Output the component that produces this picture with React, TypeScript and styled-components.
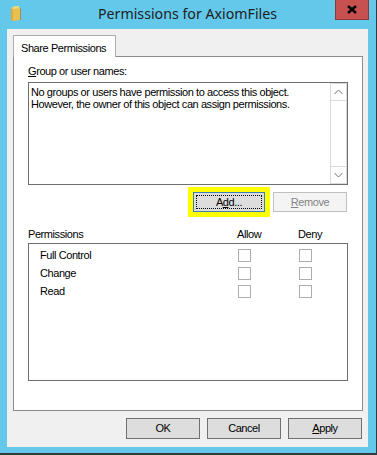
import React from "react";
import styled, { createGlobalStyle } from "styled-components";

const GlobalStyle = createGlobalStyle`
  html, body {
    margin: 0;
    padding: 0;
    background: #63c8ea;
  }
  body {
    font-family: "Liberation Sans", Arial, sans-serif;
    font-size: 11px;
    letter-spacing: -0.42px;
    color: #000;
  }
`;

const Frame = styled.div`
  width: 377px;
  height: 455px;
  box-sizing: border-box;
  background: #63c8ea;
  border-right: 1px solid #2f3b40;
  border-bottom: 2px solid #2f3b40;
  padding: 0 8px 6px 7px;
  display: flex;
  flex-direction: column;
`;

const TitleBar = styled.div`
  height: 29px;
  display: grid;
  grid-template-columns: 1fr auto 1fr;
  align-items: start;
`;

const AppIcon = styled.svg`
  margin: 5px 0 0 3px;
`;

const Title = styled.div`
  font-family: "Noto Sans", "Open Sans", sans-serif;
  font-size: 14.2px;
  letter-spacing: 0;
  color: #1e2224;
  line-height: 20px;
  padding-top: 4px;
  white-space: nowrap;
`;

const CloseButton = styled.div`
  justify-self: end;
  width: 32px;
  height: 19px;
  margin-right: -1px;
  background: #c75050;
  border: 1px solid #8a3a3a;
  border-top: none;
  display: flex;
  align-items: center;
  justify-content: center;
`;

const Client = styled.div`
  height: 418px;
  box-sizing: border-box;
  background: #f0f0f0;
  padding: 6px 5px 0 6px;
  display: flex;
  flex-direction: column;
`;

const TabStrip = styled.div`
  display: flex;
  height: 21px;
`;

const Tab = styled.div`
  position: relative;
  z-index: 1;
  width: 103px;
  height: 22px;
  background: #fff;
  border: 1px solid #adadad;
  border-bottom: none;
  padding: 6px 0 0 7px;
  box-sizing: border-box;
  line-height: 13px;
  white-space: nowrap;
`;

const Panel = styled.div`
  width: 350px;
  height: 355px;
  box-sizing: border-box;
  background: #fff;
  border: 1px solid #8c8c8c;
  padding: 8px 14px 0 14px;
  display: flex;
  flex-direction: column;
`;

const Label = styled.div`
  line-height: 13px;
  white-space: nowrap;
`;

const ListBox = styled.div`
  margin-top: 4px;
  height: 103px;
  box-sizing: border-box;
  border: 1px solid #6e6e6e;
  display: flex;
`;

const ListText = styled.div`
  flex: 1;
  padding: 3px 0 0 2px;
  line-height: 12px;
  white-space: nowrap;
`;

const ScrollBar = styled.div`
  width: 17px;
  box-sizing: border-box;
  border: 1px solid #dadada;
  background: #fff;
  display: flex;
  flex-direction: column;
  justify-content: space-between;
`;

const ScrollArrow = styled.div<{ $down?: boolean }>`
  height: 16px;
  display: flex;
  align-items: center;
  justify-content: center;
  border-bottom: ${(p) => (p.$down ? "none" : "1px solid #dadada")};
  border-top: ${(p) => (p.$down ? "1px solid #dadada" : "none")};
`;

const ActionRow = styled.div`
  display: flex;
  justify-content: flex-end;
  gap: 8px;
  margin-top: 7px;
  padding-right: 1px;
`;

const Button = styled.div<{ $w: number; $h?: number; $disabled?: boolean; $focused?: boolean }>`
  width: ${(p) => p.$w}px;
  height: ${(p) => p.$h ?? 20}px;
  box-sizing: border-box;
  border: 1px solid ${(p) => (p.$focused ? "#3c7fb1" : p.$disabled ? "#bfbfbf" : "#707070")};
  background: ${(p) => (p.$disabled ? "#f4f4f4" : "#dddddd")};
  color: ${(p) => (p.$disabled ? "#838383" : "#000")};
  display: flex;
  align-items: center;
  justify-content: center;
  line-height: 13px;
  position: relative;
  ${(p) =>
    p.$focused
      ? `
    outline: 5px solid #ffff00;
    outline-offset: 0;
    &::after {
      content: "";
      position: absolute;
      inset: 2px;
      border: 1px dotted #000;
    }
  `
      : ""}
`;

const PermHeader = styled.div`
  display: grid;
  grid-template-columns: 209px 61px 1fr;
  margin-top: 16px;
  line-height: 13px;
`;

const PermList = styled.div`
  margin-top: 2px;
  height: 138px;
  box-sizing: border-box;
  border: 1px solid #6e6e6e;
  padding: 2px 0 0 11px;
`;

const PermRow = styled.div`
  display: grid;
  grid-template-columns: 198px 61px 1fr;
  align-items: center;
  height: 18px;
  line-height: 13px;
`;

const CheckBox = styled.div`
  width: 13px;
  height: 13px;
  box-sizing: border-box;
  border: 1px solid #adadad;
  background: #fff;
`;

const Footer = styled.div`
  display: flex;
  justify-content: flex-end;
  gap: 7px;
  width: 350px;
  padding-right: 1px;
  box-sizing: border-box;
  margin-top: 7px;
`;

const Chevron: React.FC<{ down?: boolean }> = ({ down }) => (
  <svg width="9" height="6" viewBox="0 0 9 6">
    <path
      d={down ? "M0.5 1 L4.5 5 L8.5 1" : "M0.5 5 L4.5 1 L8.5 5"}
      fill="none"
      stroke="#707070"
      strokeWidth="1"
    />
  </svg>
);

const permissions = ["Full Control", "Change", "Read"];

const App: React.FC = () => {
  return (
    <>
      <GlobalStyle />
      <Frame>
        <TitleBar>
          <AppIcon width="13" height="16" viewBox="0 0 13 16">
            <path d="M1 3 L5 1 L9 1 L9 14 L1 15 Z" fill="#f3d677" />
            <path d="M3 4 L10 3 L10 15 L3 16 Z" fill="#e9bf4f" />
            <path d="M10 3 L11 4 L11 15 L10 15 Z" fill="#9b8a5a" />
            <path d="M1 3 L3 4 L3 16 L1 15 Z" fill="#d9ad3d" />
          </AppIcon>
          <Title>Permissions for AxiomFiles</Title>
          <CloseButton>
            <svg width="10" height="9" viewBox="0 0 10 9">
              <path d="M1 1 L9 8 M9 1 L1 8" stroke="#000" strokeWidth="2.4" />
            </svg>
          </CloseButton>
        </TitleBar>
        <Client>
          <TabStrip>
            <Tab>Share Permissions</Tab>
          </TabStrip>
          <Panel>
            <Label>
              <u>G</u>roup or user names:
            </Label>
            <ListBox>
              <ListText>
                No groups or users have permission to access this object.
                <br />
                However, the owner of this object can assign permissions.
              </ListText>
              <ScrollBar>
                <ScrollArrow>
                  <Chevron />
                </ScrollArrow>
                <ScrollArrow $down>
                  <Chevron down />
                </ScrollArrow>
              </ScrollBar>
            </ListBox>
            <ActionRow>
              <Button $w={72} $focused>
                A<u>d</u>d...
              </Button>
              <Button $w={74} $disabled>
                <u>R</u>emove
              </Button>
            </ActionRow>
            <PermHeader>
              <span>Permissions</span>
              <span>Allow</span>
              <span>Deny</span>
            </PermHeader>
            <PermList>
              {permissions.map((name) => (
                <PermRow key={name}>
                  <span>{name}</span>
                  <CheckBox />
                  <CheckBox />
                </PermRow>
              ))}
            </PermList>
          </Panel>
          <Footer>
            <Button $w={74} $h={21}>
              OK
            </Button>
            <Button $w={74} $h={21}>
              Cancel
            </Button>
            <Button $w={74} $h={21}>
              <u>A</u>pply
            </Button>
          </Footer>
        </Client>
      </Frame>
    </>
  );
};

export default App;
